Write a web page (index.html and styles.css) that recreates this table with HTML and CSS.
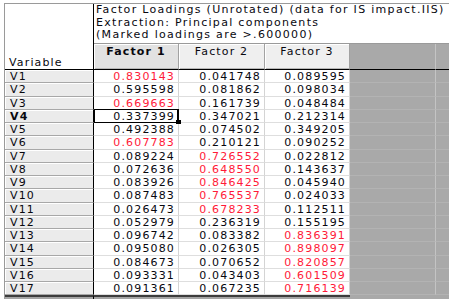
FILE: index.html
```html
<!DOCTYPE html>
<html>
<head>
<meta charset="utf-8">
<link rel="stylesheet" href="styles.css">
</head>
<body>
<div class="sheet">
  <div class="corner">Variable</div>
  <div class="title">
    <div>Factor Loadings (Unrotated) (data for IS impact.IIS)</div>
    <div>Extraction: Principal components</div>
    <div>(Marked loadings are &gt;.600000)</div>
  </div>
  <div class="hd sel">Factor 1</div>
  <div class="hd">Factor 2</div>
  <div class="hd">Factor 3</div>
  <div class="hd void"></div>
  <div class="hd void last"></div>

  <div class="lab">V1</div><div class="num r">0.830143</div><div class="num">0.041748</div><div class="num">0.089595</div><div class="g"></div><div class="g last"></div>
  <div class="lab">V2</div><div class="num">0.595598</div><div class="num">0.081862</div><div class="num">0.098034</div><div class="g"></div><div class="g last"></div>
  <div class="lab">V3</div><div class="num r">0.669663</div><div class="num">0.161739</div><div class="num">0.048484</div><div class="g"></div><div class="g last"></div>
  <div class="lab cur">V4</div><div class="num active">0.337399</div><div class="num">0.347021</div><div class="num">0.212314</div><div class="g"></div><div class="g last"></div>
  <div class="lab">V5</div><div class="num">0.492388</div><div class="num">0.074502</div><div class="num">0.349205</div><div class="g"></div><div class="g last"></div>
  <div class="lab">V6</div><div class="num r">0.607783</div><div class="num">0.210121</div><div class="num">0.090252</div><div class="g"></div><div class="g last"></div>
  <div class="lab">V7</div><div class="num">0.089224</div><div class="num r">0.726552</div><div class="num">0.022812</div><div class="g"></div><div class="g last"></div>
  <div class="lab">V8</div><div class="num">0.072636</div><div class="num r">0.648550</div><div class="num">0.143637</div><div class="g"></div><div class="g last"></div>
  <div class="lab">V9</div><div class="num">0.083926</div><div class="num r">0.846425</div><div class="num">0.045940</div><div class="g"></div><div class="g last"></div>
  <div class="lab">V10</div><div class="num">0.087483</div><div class="num r">0.765537</div><div class="num">0.024033</div><div class="g"></div><div class="g last"></div>
  <div class="lab">V11</div><div class="num">0.026473</div><div class="num r">0.678233</div><div class="num">0.112511</div><div class="g"></div><div class="g last"></div>
  <div class="lab">V12</div><div class="num">0.052979</div><div class="num">0.236319</div><div class="num">0.155195</div><div class="g"></div><div class="g last"></div>
  <div class="lab">V13</div><div class="num">0.096742</div><div class="num">0.083382</div><div class="num r">0.836391</div><div class="g"></div><div class="g last"></div>
  <div class="lab">V14</div><div class="num">0.095080</div><div class="num">0.026305</div><div class="num r">0.898097</div><div class="g"></div><div class="g last"></div>
  <div class="lab">V15</div><div class="num">0.084673</div><div class="num">0.070652</div><div class="num r">0.820857</div><div class="g"></div><div class="g last"></div>
  <div class="lab">V16</div><div class="num">0.093331</div><div class="num">0.043403</div><div class="num r">0.601509</div><div class="g"></div><div class="g last"></div>
  <div class="lab">V17</div><div class="num">0.091361</div><div class="num">0.067235</div><div class="num r">0.716139</div><div class="g"></div><div class="g last"></div>

  <div class="ft lab-ft"></div><div class="ft"></div><div class="ft"></div><div class="ft"></div><div class="ft gray"></div><div class="ft gray"></div>
</div>
</body>
</html>
```

FILE: styles.css
```css
body {
  margin: 0;
  background: #fff;
  font-family: "DejaVu Sans", sans-serif;
  font-size: 11px;
  letter-spacing: 1.15px;
  color: #08080f;
  overflow: hidden;
}

.sheet {
  margin: 3px 0 0 4px;
  width: 445px;
  box-sizing: border-box;
  display: grid;
  grid-template-columns: 89px 85px 86px 85px 86px 13px;
  grid-template-rows: 40px 26px repeat(17, 13.25px) 4px;
  border-top: 1px solid #9a9a9a;
  border-left: 1px solid #9a9a9a;
}

.sheet > div {
  box-sizing: border-box;
  white-space: nowrap;
}

.corner {
  grid-row: 1 / 3;
  display: flex;
  align-items: flex-end;
  padding-left: 4px;
  line-height: 13px;
  background: #fff;
  border-right: 1px solid #000;
  border-bottom: 1px solid #000;
}

.title {
  grid-column: 2 / 7;
  padding-left: 2px;
  line-height: 12.5px;
  letter-spacing: 1.3px;
  background: #fff;
  border-bottom: 1px solid #9a9a9a;
}

.hd {
  text-align: center;
  padding-top: 1px;
  line-height: 13px;
  background: #efefef;
  border-right: 1px solid #a2a2a2;
  border-bottom: 1px solid #000;
  box-shadow: inset 1px 1px 0 #fff, inset 0 -1px 0 #b8b8b8;
}

.hd.sel {
  background: #e2e2e2;
  font-weight: bold;
}

.hd.void {
  background: #a9a9a9;
  box-shadow: none;
  border-right-color: #c4c4c4;
}

.hd.void.last {
  border-right: 0;
}

.lab {
  padding-left: 5px;
  line-height: 13px;
  background: #ebebeb;
  border-right: 1px solid #000;
  border-bottom: 1px solid #a8a8a8;
  box-shadow: inset 1px 1px 0 #fff;
}

.lab.cur {
  font-weight: bold;
}

.num {
  text-align: right;
  padding-right: 3px;
  line-height: 13px;
  background: #fff;
  border-right: 1px solid #d4d4d4;
  border-bottom: 1px solid #dedede;
}

.r {
  color: #ff1a38;
}

.num.active {
  position: relative;
}

.num.active::before {
  content: "";
  position: absolute;
  left: 0;
  top: -1px;
  right: -1px;
  bottom: -1px;
  border: 1px solid #000;
  border-right-width: 2px;
}

.num.active::after {
  content: "";
  position: absolute;
  right: -3px;
  bottom: -2px;
  width: 5px;
  height: 4px;
  background: #000;
}

.g {
  background: #a9a9a9;
  border-right: 1px solid #c4c4c4;
  border-bottom: 1px solid #b3b3b3;
}

.g.last {
  border-right: 0;
}

.ft {
  background: #a4a4a4;
  border-top: 2px solid #3c3c3c;
}

.ft.lab-ft {
  border-right: 1px solid #000;
}

.ft.gray {
  background: #a9a9a9;
  border-top: 0;
}
```
